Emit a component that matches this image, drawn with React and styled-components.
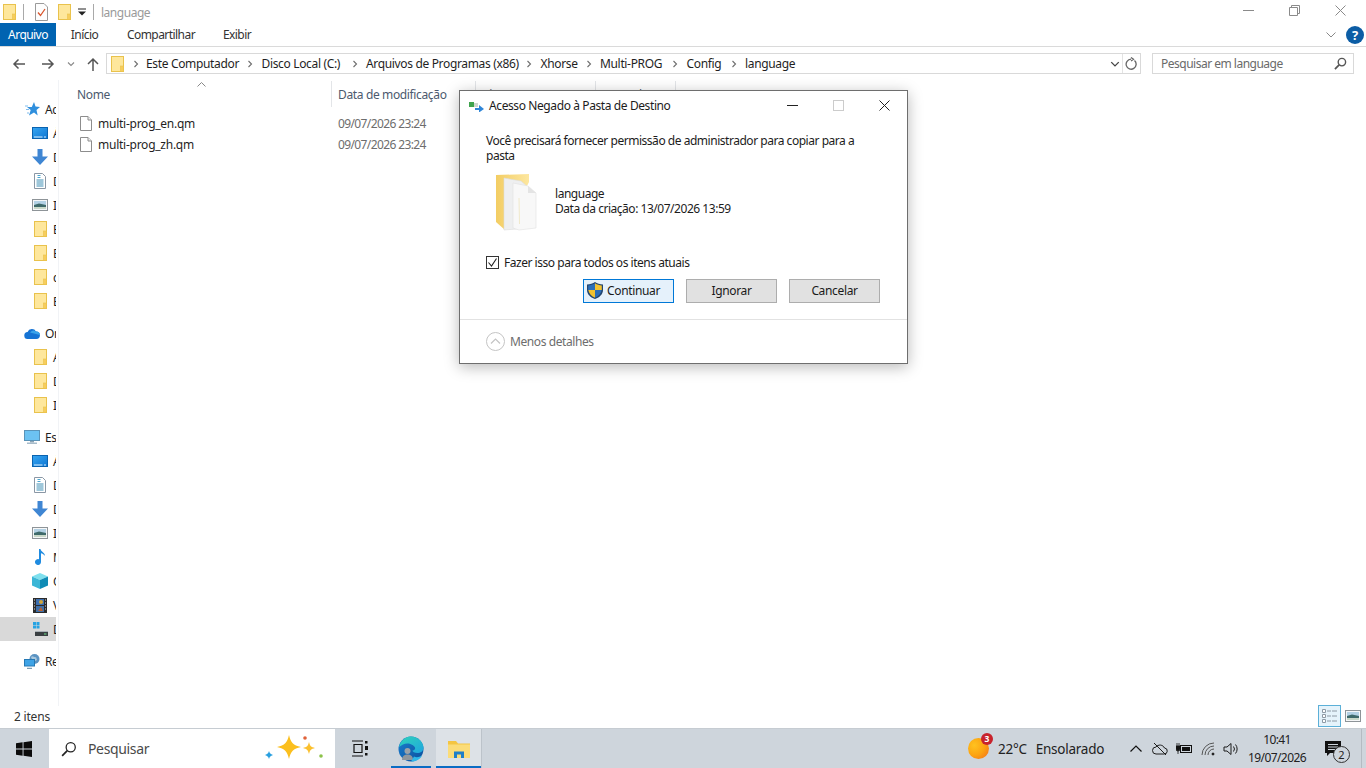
import React from "react";
import styled, { createGlobalStyle } from "styled-components";

const Global = createGlobalStyle`
  html, body { margin: 0; padding: 0; background: #fff; }
  * { box-sizing: border-box; }
`;
const FONT = `"Noto Sans", "Open Sans", "Liberation Sans", sans-serif`;

const Page = styled.div`
  position: relative; width: 1366px; height: 768px; overflow: hidden; display: flex; flex-direction: column;
  font-family: ${FONT}; font-size: 12px; letter-spacing: -0.36px; color: #1a1a1a; background: #fff;
`;

/* ---------- title bar ---------- */
const TitleBar = styled.div`display: flex; align-items: center; height: 23px; padding-left: 2px;`;
const QuickSlot = styled.span`display: flex; align-items: center; justify-content: center; width: ${p => p.$w}px; margin-left: ${p => p.$ml || 0}px;`;
const QuickSep = styled.span`width: 1px; height: 16px; background: #a9a9a9; margin-left: ${p => p.$ml}px;`;
const WindowTitle = styled.span`margin-left: 7px; margin-top: 1px; color: #9a9a9a; letter-spacing: -0.48px;`;
const WindowControls = styled.div`display: flex; margin-left: auto; padding-right: 3px; margin-top: -2px;`;
const WinBtn = styled.span`width: 46px; height: 23px; display: flex; align-items: center; justify-content: center;`;

/* ---------- ribbon ---------- */
const Ribbon = styled.div`display: flex; align-items: center; height: 24px; border-bottom: 1px solid #dadada; letter-spacing: -0.55px;`;
const FileTab = styled.div`width: 56px; height: 23px; background: #0063b1; color: #fff; display: flex; align-items: center; justify-content: center;`;
const RibbonTab = styled.div`width: ${p => p.$w}px; text-align: center; color: #333;`;
const RibbonRight = styled.div`margin-left: auto; display: flex; align-items: center; gap: 10px; padding-right: 2px;`;
const HelpBadge = styled.span`
  width: 18px; height: 18px; border-radius: 50%; background: #0c5da5; color: #fff; font-weight: 700; font-size: 13px;
  display: flex; align-items: center; justify-content: center; letter-spacing: 0;
`;

/* ---------- address row ---------- */
const AddressRow = styled.div`display: flex; align-items: center; height: 33px;`;
const NavSlot = styled.span`display: flex; align-items: center; justify-content: center; width: ${p => p.$w}px; margin-left: ${p => p.$ml || 0}px;`;
const AddressBox = styled.div`
  width: 1035px; height: 21px; margin-left: 7px; border: 1px solid #d9d9d9; display: flex; align-items: center; padding-left: 4px;
`;
const Crumbs = styled.div`display: flex; align-items: center; margin-left: 2px; color: #1f1f1f; letter-spacing: -0.34px;`;
const Crumb = styled.span`white-space: nowrap; width: ${p => p.$w}px; flex: none;`;
const CrumbSep = styled.span`width: ${p => p.$w || 22.5}px; display: flex; justify-content: center; flex: none;`;
const AddressTools = styled.div`margin-left: auto; display: flex; align-items: center; height: 100%;`;
const ToolDivider = styled.span`width: 1px; height: 19px; background: #e3e3e3; margin: 0 2px;`;
const RefreshGap = styled.span`width: 3px;`;
const SearchBox = styled.div`
  width: 202px; height: 21px; margin-left: 11px; border: 1px solid #d9d9d9; display: flex; align-items: center; justify-content: space-between;
  padding: 0 6px 0 8px; color: #6a6a6a; letter-spacing: -0.5px;
`;

/* ---------- body ---------- */
const Body = styled.div`flex: 1; display: flex; min-height: 0;`;
const Sidebar = styled.nav`width: 59px; padding: 17px 2px 0 0; border-right: 1px solid #f1f3f6; display: flex; flex-direction: column; gap: 8px;`;
const NavGroup = styled.div`display: flex; flex-direction: column;`;
const NavRow = styled.div`
  height: 24px; width: 56px; overflow: hidden; display: flex; align-items: center; white-space: nowrap;
  padding-left: ${p => (p.$section ? 24 : 32)}px; gap: 5px; color: #1f1f1f;
  background: ${p => (p.$selected ? "#d9d9d9" : "transparent")};
`;
const NavIcon = styled.span`width: 16px; height: 20px; flex: none; display: flex; align-items: center; justify-content: center;`;

const Files = styled.main`flex: 1; padding: 1px 0 0 18px;`;
const HeaderRow = styled.div`display: flex; height: 26px; color: #4c5a6e;`;
const HeaderCell = styled.div`
  position: relative; width: ${p => p.$w}px; flex: none; padding-left: ${p => p.$pl || 0}px; display: flex; align-items: center; white-space: nowrap;
  border-right: 1px solid #e3e5e8;
`;
const SortMark = styled.svg`position: absolute; left: 120px; top: 1px;`;
const FileList = styled.div`padding-top: 6px;`;
const FileRow = styled.div`display: flex; height: 21px; align-items: center;`;
const FileName = styled.div`width: 254px; flex: none; display: flex; align-items: center; gap: 6px; padding-left: 3px; color: #1f1f1f; letter-spacing: -0.25px;`;
const FileDate = styled.div`padding-left: 7px; color: #6d6d6d; letter-spacing: -0.62px;`;

/* ---------- status bar ---------- */
const StatusBar = styled.div`height: 22px; display: flex; align-items: center; padding: 0 2px 2px 14px; color: #333; letter-spacing: -0.2px;`;
const ViewButtons = styled.div`margin-left: auto; display: flex; align-items: center;`;
const ViewBtn = styled.span`
  width: 23px; height: 22px; display: flex; align-items: center; justify-content: center;
  background: ${p => (p.$on ? "#e5f3fb" : "transparent")}; border: 1px solid ${p => (p.$on ? "#5cb0d8" : "transparent")};
`;

/* ---------- taskbar ---------- */
const Taskbar = styled.footer`height: 40px; background: #ced5dc; display: flex; align-items: stretch; border-top: 1px solid #c6ccd2;`;
const StartBtn = styled.span`width: 48px; display: flex; align-items: center; justify-content: center;`;
const TaskSearch = styled.div`
  width: 286px; margin-left: 1px; background: #fff; display: flex; align-items: center; padding: 0 8px 0 12px;
  font-size: 14px; letter-spacing: -0.35px; color: #4a4a4a;
`;
const SearchLabel = styled.span`margin-left: 11px;`;
const Sparkle = styled.span`margin-left: auto; display: flex; align-items: center;`;
const TaskBtn = styled.span`
  width: ${p => p.$w}px; margin-left: ${p => p.$ml || 0}px; display: flex; align-items: center; justify-content: center;
  background: ${p => (p.$open ? "#dde2e7" : "transparent")};
  border-bottom: 2px solid ${p => (p.$run ? "#0a6cc4" : "transparent")};
  border-top: 2px solid transparent;
`;
const TaskDivider = styled.span`width: 1px; background: #bcc3ca;`;
const Tray = styled.div`margin-left: auto; display: flex; align-items: center; color: #222; height: 100%;`;
const Weather = styled.div`display: flex; align-items: center; width: 156px; font-size: 13.5px; letter-spacing: -0.25px;`;
const WeatherBall = styled.span`
  position: relative; width: 21px; height: 21px; border-radius: 50%; margin-right: 9px; flex: none;
  background: radial-gradient(circle at 30% 35%, #ffc21f 0%, #fca311 50%, #f26b1d 100%);
`;
const WeatherCount = styled.span`
  position: absolute; right: -4px; top: -5px; width: 12px; height: 12px; border-radius: 50%; background: #c8232c; color: #fff;
  font-size: 8.5px; font-weight: 700; line-height: 12px; text-align: center; letter-spacing: 0;
`;
const WeatherText = styled.span`margin-right: 9px;`;
const TraySlot = styled.span`width: ${p => p.$w}px; display: flex; align-items: center; justify-content: center; flex: none;`;
const Clock = styled.div`width: 70px; display: flex; flex-direction: column; align-items: center; line-height: 18px; color: #222; letter-spacing: -0.6px;`;
const Notice = styled.span`position: relative; width: 42px; height: 100%; display: flex; align-items: center; justify-content: center;`;
const NoticeCount = styled.span`
  position: absolute; left: 21px; top: 17px; width: 17px; height: 17px; border-radius: 50%; border: 1px solid #333; background: #ced5dc;
  font-size: 11px; line-height: 15px; text-align: center; letter-spacing: 0;
`;
const DesktopEdge = styled.span`width: 1px; height: 100%; background: #b4bbc2; margin: 0 4px 0 7px;`;

/* ---------- dialog ---------- */
const Dialog = styled.section`
  position: absolute; left: 459px; top: 90px; width: 449px; height: 274px; background: #fff;
  border: 1px solid #6e6e6e; box-shadow: 0 3px 14px rgba(0,0,0,.28); display: flex; flex-direction: column;
`;
const DialogHead = styled.header`height: 29px; display: flex; align-items: center; padding-left: 9px; color: #1c1c1c; letter-spacing: -0.4px;`;
const DialogTitle = styled.span`margin-left: 5px;`;
const DialogControls = styled.div`margin-left: auto; display: flex;`;
const DialogCtl = styled.span`width: 46px; display: flex; justify-content: center; align-items: center;`;
const DialogBody = styled.div`flex: 1; padding: 13px 26px 0 26px; display: flex; flex-direction: column; letter-spacing: -0.47px;`;
const Message = styled.p`margin: 0; line-height: 15px; width: 390px; color: #1c1c1c;`;
const FolderInfo = styled.div`display: flex; align-items: center; margin-top: 9px; height: 60px; padding-left: 9px;`;
const FolderMeta = styled.div`margin-left: 14px; line-height: 15px; margin-top: -2px; color: #1c1c1c;`;
const CheckRow = styled.label`display: flex; align-items: center; gap: 5px; margin-top: 23px; height: 14px; color: #1c1c1c;`;
const CheckBox = styled.span`width: 13px; height: 13px; border: 1px solid #333; display: flex; align-items: center; justify-content: center; background: #fff;`;
const ButtonRow = styled.div`display: flex; justify-content: flex-end; gap: 12px; margin-top: 10px; padding-right: 1px;`;
const DialogButton = styled.button`
  width: 91px; height: 24px; font: inherit; letter-spacing: -0.35px; color: #1a1a1a; display: flex; align-items: center; gap: 4px;
  justify-content: ${p => (p.$primary ? "flex-start" : "center")}; padding: 0 0 2px ${p => (p.$primary ? 3 : 0)}px;
  background: ${p => (p.$primary ? "#e5f1fb" : "#e1e1e1")};
  border: 1px solid ${p => (p.$primary ? "#0078d7" : "#adadad")};
`;
const DialogFoot = styled.footer`
  height: 44px; border-top: 1px solid #e2e2e2; display: flex; align-items: center; padding: 0 0 0 26px; gap: 5px; color: #6d6d6d; letter-spacing: -0.42px;
`;

/* ---------- drawings ---------- */
const Folder = ({ w = 13, h = 16 }) => (
  <svg width={w} height={h} viewBox="0 0 13 16">
    <rect x=".5" y=".5" width="12" height="15" fill="#fee79c" stroke="#e9c24c" />
    <rect x="9.500" y="10" width="3" height="5.500" fill="#f7cd5c" stroke="#e9c24c" strokeWidth=".6" />
  </svg>
);
const DesktopIc = () => (
  <svg width="16" height="12" viewBox="0 0 16 12">
    <defs><linearGradient id="dk" x1="0" y1="0" x2="1" y2="1"><stop offset="0" stopColor="#37a6f2" /><stop offset="1" stopColor="#0e76d2" /></linearGradient></defs>
    <rect x=".5" y=".5" width="15" height="11" fill="url(#dk)" stroke="#0a63b0" />
    <path d="M2 10h8.500M12 10h2" stroke="#dff1ff" strokeWidth="1" />
  </svg>
);
const DownIc = () => (
  <svg width="16" height="16" viewBox="0 0 16 16"><path d="M5.500 0h5v7.500H16L8 16 0 7.500h5.500z" fill="#3f86d3" /></svg>
);
const DocIc = () => (
  <svg width="12" height="16" viewBox="0 0 12 16">
    <path d="M.5.500h8l3 3v12H.5z" fill="#fff" stroke="#8a97a5" />
    <path d="M2.500 7h7M2.500 9h7M2.500 11h7M2.500 13h7" stroke="#3e8fb5" strokeWidth="1" />
    <path d="M3.500 2.500h3M3.500 4.500h3" stroke="#4aa6d0" strokeWidth="1" />
  </svg>
);
const PicIc = () => (
  <svg width="16" height="12" viewBox="0 0 16 12">
    <rect x=".5" y=".5" width="15" height="11" fill="#f6f7f8" stroke="#8e9498" />
    <rect x="2" y="2" width="12" height="4" fill="#b3d1e4" />
    <path d="M2 6l5-1.500L14 6v4H2z" fill="#3f6a6a" />
    <rect x="2" y="8" width="12" height="2" fill="#c9d8c8" />
  </svg>
);
const StarIc = () => (
  <svg width="16" height="14" viewBox="0 0 16 14">
    <path d="M10 0l1.500 4.500L16 5l-3.500 3 1.200 5.500L10 10.500 5 13.500l1.700-5.500L3 5h4.800z" fill="#2f8fdd" />
    <path d="M1 4h3M2 7.500h3M3 11h2" stroke="#7fbcec" strokeWidth="1" />
  </svg>
);
const CloudIc = () => (
  <svg width="16" height="11" viewBox="0 0 16 11">
    <path d="M4 11a3.500 3.500 0 0 1-.4-7A4.600 4.600 0 0 1 12 3.400 3.800 3.800 0 0 1 12.300 11z" fill="#1573d4" />
    <path d="M6 4.500A4.600 4.600 0 0 1 12 3.400 3.800 3.800 0 0 1 16 7z" fill="#39a3ea" />
  </svg>
);
const MonitorIc = () => (
  <svg width="16" height="14" viewBox="0 0 16 14">
    <rect x=".5" y=".5" width="15" height="10" fill="#6cc2f2" stroke="#5a93b8" />
    <rect x="6" y="11" width="4" height="1.500" fill="#8aa3b4" />
    <rect x="3" y="12.500" width="10" height="1.500" fill="#a7bccb" />
  </svg>
);
const MusicIc = () => (
  <svg width="12" height="16" viewBox="0 0 12 16">
    <path d="M5 0h1.500c.3 2.500 4.500 3.500 4.500 7-1-1.500-2.500-2.500-4-2.800V13a3 3 0 1 1-2-2.800z" fill="#1f8be0" />
  </svg>
);
const CubeIc = () => (
  <svg width="16" height="16" viewBox="0 0 16 16">
    <path d="M8 0l8 3.500L8 7 0 3.500z" fill="#7fe0ee" />
    <path d="M0 3.500L8 7v9l-8-3.500z" fill="#3bb6d6" />
    <path d="M16 3.500L8 7v9l8-3.500z" fill="#0f8bb5" />
  </svg>
);
const FilmIc = () => (
  <svg width="14" height="15" viewBox="0 0 14 15">
    <rect width="14" height="15" fill="#2b2b2b" />
    <rect x="3" y="1" width="8" height="6" fill="#3c6fb0" />
    <rect x="3" y="8" width="8" height="6" fill="#3f6fa8" />
    <circle cx="8" cy="4" r="2" fill="#d2a63a" />
    <path d="M5 13l3-4 2 4z" fill="#b9612e" />
    <path d="M1 2h1M1 5h1M1 8h1M1 11h1M12 2h1M12 5h1M12 8h1M12 11h1" stroke="#ddd" />
  </svg>
);
const DriveIc = () => (
  <svg width="16" height="16" viewBox="0 0 16 16">
    <path d="M1 1h3v3H1zM4.500 1h3v3h-3zM1 4.500h3v3H1zM4.500 4.500h3v3h-3z" fill="#27a3e3" />
    <rect x="3" y="11" width="13" height="4" fill="#3a3f42" />
    <rect x="3" y="10" width="13" height="1" fill="#a9b1b6" />
    <path d="M12 13h2.500" stroke="#6ee08a" />
  </svg>
);
const NetIc = () => (
  <svg width="16" height="15" viewBox="0 0 16 15">
    <circle cx="10.500" cy="5" r="5" fill="#5b93c2" />
    <path d="M7 3c2-2 3 1 5 0l1 3-4 2z" fill="#aac8dd" />
    <rect x=".5" y="5.500" width="10" height="6.500" fill="#3ea3e6" stroke="#2578b4" />
    <path d="M3 14.500h5" stroke="#7d9cb2" strokeWidth="1.500" />
  </svg>
);
const ChecklistIc = () => (
  <svg width="13" height="18" viewBox="0 0 13 18">
    <path d="M.5.500h8.500l3.500 3.500v13.500H.5z" fill="#fdfdfd" stroke="#9a9a9a" />
    <path d="M3 9.500l2.500 3L10 6" fill="none" stroke="#d9542b" strokeWidth="1.300" />
  </svg>
);
const FileIc = () => (
  <svg width="12" height="15" viewBox="0 0 12 15">
    <path d="M.5.500h7.500l3.500 3.500v10.500H.5z" fill="#fff" stroke="#8d8d8d" />
    <path d="M8 .500V4h3.500" fill="#f1f1f1" stroke="#8d8d8d" />
  </svg>
);
const Chevron = ({ dir = "r", c = "#6e6e6e", s = 8 }) => (
  <svg width={s} height={s} viewBox="0 0 8 8">
    <path d={dir === "r" ? "M2.500 1l3 3-3 3" : dir === "d" ? "M1 2.500l3 3 3-3" : "M1 5.500l3-3 3 3"} fill="none" stroke={c} strokeWidth="1.100" />
  </svg>
);
const ArrowLeft = ({ c }) => (
  <svg width="14" height="12" viewBox="0 0 14 12"><path d="M13 6H2M6.500 1.500L2 6l4.500 4.500" fill="none" stroke={c} strokeWidth="1.500" /></svg>
);
const ArrowRight = ({ c }) => (
  <svg width="14" height="12" viewBox="0 0 14 12"><path d="M1 6h11M7.500 1.500L12 6l-4.500 4.500" fill="none" stroke={c} strokeWidth="1.500" /></svg>
);
const ArrowUp = () => (
  <svg width="12" height="14" viewBox="0 0 12 14"><path d="M6 14V2M1 7l5-5 5 5" fill="none" stroke="#555" strokeWidth="1.500" /></svg>
);
const BigFolder = () => (
  <svg width="46" height="60" viewBox="0 0 46 60">
    <defs>
      <linearGradient id="fy" x1="0" y1="0" x2="1" y2="0"><stop offset="0" stopColor="#f3cd63" /><stop offset="1" stopColor="#fde7a0" /></linearGradient>
    </defs>
    <path d="M1 3l33-1v8L10 58 1 50z" fill="url(#fy)" />
    <path d="M9 6l17 3 8 7v40L9 58z" fill="#eeeff0" stroke="#dcdcdc" strokeWidth=".6" />
    <path d="M18 11l15 3 8 7v35l-17 2-6-2z" fill="#f8f8f8" stroke="#e0e0e0" strokeWidth=".6" />
    <path d="M33 14v7h8z" fill="#e4e4e4" />
    <path d="M24 26l.5 26" stroke="#efe6c0" strokeWidth=".8" />
  </svg>
);
const Shield = () => (
  <svg width="16" height="17" viewBox="0 0 16 17">
    <path d="M8 0c2 1.500 5 2.500 8 2.500V8c0 4-3 7.200-8 9-5-1.800-8-5-8-9V2.500C3 2.500 6 1.500 8 0z" fill="#23456f" />
    <path d="M8 1.200V8h6.800V3.500C12.300 3.300 10 2.500 8 1.200zM8 8v7.700C4.500 14.300 2 11.500 1.300 8z" fill="#f2c230" />
    <path d="M8 1.200V8H1.200V3.500C3.700 3.300 6 2.500 8 1.200zM8 8h6.700c-.7 3.500-3.200 6.300-6.700 7.700z" fill="#2b6eb8" />
  </svg>
);
const WinLogo = () => (
  <svg width="16" height="16" viewBox="0 0 16 16">
    <path d="M0 2.300L6.600 1.300v6.200H0zM7.500 1.200L16 0v7.500H7.500zM0 8.400h6.600v6.300L0 13.700zM7.500 8.400H16V16l-8.500-1.200z" fill="#0b0b0b" />
  </svg>
);
const SparkleArt = () => (
  <svg width="62" height="30" viewBox="0 0 62 30">
    <path d="M24 1c2 8 4 10 12 12-8 2-10 4-12 12-2-8-4-10-12-12 8-2 10-4 12-12z" fill="#fbbf1e" />
    <path d="M44 8c1 4 2 5 6 6-4 1-5 2-6 6-1-4-2-5-6-6 4-1 5-2 6-6z" fill="#fbc02d" />
    <path d="M4 17c.7 2.300 1.500 3 4 4-2.500 1-3.300 1.700-4 4-.7-2.300-1.500-3-4-4 2.500-1 3.300-1.700 4-4z" fill="#2aa0e0" />
    <circle cx="40" cy="4" r="1.800" fill="#e0623a" />
    <circle cx="56" cy="22" r="1.800" fill="#8cc24a" />
  </svg>
);
const Magnifier = ({ s = 14, c = "#555", w = 1.5 }) => (
  <svg width={s} height={s} viewBox="0 0 14 14">
    <circle cx="8.500" cy="5.500" r="4" fill="none" stroke={c} strokeWidth={w} />
    <path d="M5.500 8.500L1 13" stroke={c} strokeWidth={w + .4} />
  </svg>
);
const TaskViewIc = () => (
  <svg width="18" height="17" viewBox="0 0 18 17">
    <path d="M1 1h11M1 16h11M3 4.500h8v8H3z" fill="none" stroke="#111" strokeWidth="1.200" />
    <rect x="14" y="1" width="2.500" height="2.500" fill="#111" />
    <rect x="14" y="6" width="3" height="4" fill="#111" />
    <rect x="14" y="13" width="2.500" height="2.500" fill="#111" />
  </svg>
);
const EdgeIc = () => (
  <svg width="26" height="26" viewBox="0 0 26 26">
    <defs>
      <linearGradient id="eg" x1="0" y1="0" x2="1" y2="1"><stop offset="0" stopColor="#2fd3b8" /><stop offset="1" stopColor="#1fa5e0" /></linearGradient>
      <linearGradient id="eb" x1="0" y1="0" x2="1" y2="1"><stop offset="0" stopColor="#1a7fd0" /><stop offset="1" stopColor="#0c4f9c" /></linearGradient>
    </defs>
    <circle cx="13" cy="13" r="12.500" fill="url(#eb)" />
    <path d="M1 11C3 3 9 .5 13 .5 20 .5 25.500 6 25.500 12c0 3-3 5-6 5-3 0-5-1-5-2.500 2 0 3-1.500 2.500-3C15.500 8 9 6 5 8.500 3 9.500 2 10.500 1 11z" fill="url(#eg)" />
    <circle cx="9.500" cy="15" r="3" fill="#9aa1a8" />
    <path d="M4 24c0-4 2.500-5.500 5.500-5.500S15 20 15 24z" fill="#8f969d" />
    <path d="M13 25.500c5 0 9-2 11-6-3 2-6 2-8 1z" fill="#2fb7e8" />
  </svg>
);
const ExplorerIc = () => (
  <svg width="22" height="18" viewBox="0 0 22 18">
    <path d="M0 1h8l2 2.500h12V18H0z" fill="#f4c542" />
    <path d="M0 4.500h22V18H0z" fill="#fbdc78" />
    <path d="M6 18v-6.500h10V18h-3v-3.500H9V18z" fill="#1f7fc8" />
  </svg>
);
const Outline = ({ children, w = 18, h = 16 }) => (
  <svg width={w} height={h} viewBox={`0 0 ${w} ${h}`} fill="none" stroke="#1c1c1c" strokeWidth="1">{children}</svg>
);

const QUICK = [
  [DesktopIc, "Área de Trabalho"], [DownIc, "Downloads"], [DocIc, "Documentos"], [PicIc, "Imagens"],
  [Folder, "Backup"], [Folder, "Bin"], [Folder, "config"], [Folder, "Eletrônica"],
];
const DRIVE = [[Folder, "Anexos"], [Folder, "Documentos"], [Folder, "Imagens"]];
const PC = [
  [DesktopIc, "Área de Trabalho"], [DocIc, "Documentos"], [DownIc, "Downloads"], [PicIc, "Imagens"],
  [MusicIc, "Músicas"], [CubeIc, "Objetos 3D"], [FilmIc, "Vídeos"],
];
const PATH = [
  ["Este Computador", 93], ["Disco Local (C:)", 82], ["Arquivos de Programas (x86)", 152],
  ["Xhorse", 37], ["Multi-PROG", 64], ["Config", 36], ["language", 49],
];

const NavItem = ({ icon: I, label, section, selected }) => (
  <NavRow $section={section} $selected={selected}>
    <NavIcon><I /></NavIcon><span>{label}</span>
  </NavRow>
);

export default function App() {
  return (
    <Page>
      <Global />
      <TitleBar>
        <QuickSlot $w={14}><Folder /></QuickSlot>
        <QuickSep $ml={7} />
        <QuickSlot $w={13} $ml={11}><ChecklistIc /></QuickSlot>
        <QuickSlot $w={14} $ml={9}><Folder /></QuickSlot>
        <QuickSlot $w={8} $ml={7}>
          <svg width="8" height="8" viewBox="0 0 8 8"><path d="M0 1h8" stroke="#222" /><path d="M0 3.500h8L4 7.500z" fill="#222" /></svg>
        </QuickSlot>
        <QuickSep $ml={7} />
        <WindowTitle>language</WindowTitle>
        <WindowControls>
          <WinBtn><svg width="11" height="11" viewBox="0 0 11 11"><path d="M0 5.500h11" stroke="#8a8a8a" /></svg></WinBtn>
          <WinBtn><svg width="11" height="11" viewBox="0 0 11 11"><path d="M.5 2.500h8v8h-8zM2.500 2.500v-2h8v8h-2" fill="none" stroke="#8a8a8a" /></svg></WinBtn>
          <WinBtn><svg width="11" height="11" viewBox="0 0 11 11"><path d="M.5.500l10 10M10.500.500l-10 10" stroke="#8a8a8a" /></svg></WinBtn>
        </WindowControls>
      </TitleBar>

      <Ribbon>
        <FileTab>Arquivo</FileTab>
        <RibbonTab $w={57}>Início</RibbonTab>
        <RibbonTab $w={96}>Compartilhar</RibbonTab>
        <RibbonTab $w={56}>Exibir</RibbonTab>
        <RibbonRight>
          <svg width="10" height="6" viewBox="0 0 10 6"><path d="M.5.500L5 5 9.500.500" fill="none" stroke="#888" /></svg>
          <HelpBadge>?</HelpBadge>
        </RibbonRight>
      </Ribbon>

      <AddressRow>
        <NavSlot $w={14} $ml={12}><ArrowLeft c="#555" /></NavSlot>
        <NavSlot $w={14} $ml={15}><ArrowRight c="#555" /></NavSlot>
        <NavSlot $w={8} $ml={12}><Chevron dir="d" c="#888" /></NavSlot>
        <NavSlot $w={12} $ml={12}><ArrowUp /></NavSlot>
        <AddressBox>
          <Folder />
          <Crumbs>
            <CrumbSep $w={20}><Chevron /></CrumbSep>
            {PATH.map(([p, w], i) => (
              <React.Fragment key={p}>
                {i > 0 && <CrumbSep><Chevron /></CrumbSep>}
                <Crumb $w={w}>{p}</Crumb>
              </React.Fragment>
            ))}
          </Crumbs>
          <AddressTools>
            <Chevron dir="d" c="#444" s={10} />
            <ToolDivider />
            <svg width="12" height="13" viewBox="0 0 12 13"><path d="M9.500 3.500A5 5 0 1 1 6 2.200M6 .5L8.500 2.300 6 4" fill="none" stroke="#666" strokeWidth="1.300" /></svg>
            <RefreshGap />
          </AddressTools>
        </AddressBox>
        <SearchBox>
          <span>Pesquisar em language</span>
          <Magnifier s={13} />
        </SearchBox>
      </AddressRow>

      <Body>
        <Sidebar>
          <NavGroup>
            <NavItem section icon={StarIc} label="Acesso rápido" />
            {QUICK.map(([I, l]) => <NavItem key={l} icon={I} label={l} />)}
          </NavGroup>
          <NavGroup>
            <NavItem section icon={CloudIc} label="OneDrive" />
            {DRIVE.map(([I, l]) => <NavItem key={l} icon={I} label={l} />)}
          </NavGroup>
          <NavGroup>
            <NavItem section icon={MonitorIc} label="Este Computador" />
            {PC.map(([I, l]) => <NavItem key={l} icon={I} label={l} />)}
            <NavItem selected icon={DriveIc} label="Disco Local (C:)" />
          </NavGroup>
          <NavGroup>
            <NavItem section icon={NetIc} label="Rede" />
          </NavGroup>
        </Sidebar>
        <Files>
          <HeaderRow>
            <HeaderCell $w={255}>
              Nome
              <SortMark width="9" height="5" viewBox="0 0 9 5"><path d="M.5 4.500L4.500.5l4 4" fill="none" stroke="#888" /></SortMark>
            </HeaderCell>
            <HeaderCell $w={144} $pl={6}>Data de modificação</HeaderCell>
            <HeaderCell $w={120} $pl={7}>Tipo</HeaderCell>
            <HeaderCell $w={80} $pl={7}>Tamanho</HeaderCell>
          </HeaderRow>
          <FileList>
            <FileRow>
              <FileName><FileIc />multi-prog_en.qm</FileName>
              <FileDate>09/07/2026 23:24</FileDate>
            </FileRow>
            <FileRow>
              <FileName><FileIc />multi-prog_zh.qm</FileName>
              <FileDate>09/07/2026 23:24</FileDate>
            </FileRow>
          </FileList>
        </Files>
      </Body>

      <StatusBar>
        2 itens
        <ViewButtons>
          <ViewBtn $on>
            <svg width="16" height="14" viewBox="0 0 16 14">
              <path d="M.5.500h3v3h-3zM.5 5.500h3v3h-3zM.5 10.500h3v3h-3z" fill="#fff" stroke="#8e9aa5" />
              <path d="M5 2h4M10 2h5M5 7h4M10 7h5M5 12h4M10 12h5" stroke="#8e9aa5" />
            </svg>
          </ViewBtn>
          <ViewBtn><PicIc /></ViewBtn>
        </ViewButtons>
      </StatusBar>

      <Taskbar>
        <StartBtn><WinLogo /></StartBtn>
        <TaskSearch>
          <Magnifier s={16} c="#222" w={1.1} />
          <SearchLabel>Pesquisar</SearchLabel>
          <Sparkle><SparkleArt /></Sparkle>
        </TaskSearch>
        <TaskBtn $w={48} $ml={1}><TaskViewIc /></TaskBtn>
        <TaskBtn $w={40} $ml={7} $run><EdgeIc /></TaskBtn>
        <TaskBtn $w={45} $ml={5} $run $open><ExplorerIc /></TaskBtn>
        <TaskDivider />
        <Tray>
          <Weather>
            <WeatherBall><WeatherCount>3</WeatherCount></WeatherBall>
            <WeatherText>22°C</WeatherText>
            <span>Ensolarado</span>
          </Weather>
          <TraySlot $w={24}>
            <svg width="12" height="7" viewBox="0 0 12 7"><path d="M.5 6.500L6 1l5.500 5.500" fill="none" stroke="#111" strokeWidth="1.200" /></svg>
          </TraySlot>
          <TraySlot $w={24}>
            <Outline w={16} h={14}><path d="M4 12h8a3 3 0 0 0 .5-6A5 5 0 0 0 4 5a3.500 3.500 0 0 0 0 7zM2 1l12 12" /></Outline>
          </TraySlot>
          <TraySlot $w={24}>
            <svg width="16" height="12" viewBox="0 0 16 12">
              <rect x="4.500" y="2.500" width="11" height="7" fill="none" stroke="#111" />
              <rect x="6" y="4" width="8" height="4" fill="#111" />
              <path d="M0 3h4v3a2 2 0 0 1-4 0zM1 0v3M3 0v3M2 8v3" fill="#111" stroke="#111" strokeWidth=".8" />
            </svg>
          </TraySlot>
          <TraySlot $w={24}>
            <Outline w={14} h={14}><path d="M1 13A12 12 0 0 1 13 1M4 13a9 9 0 0 1 9-9M7 13a6 6 0 0 1 6-6" stroke="#555" /><circle cx="12" cy="12" r="1" fill="#111" /></Outline>
          </TraySlot>
          <TraySlot $w={22}>
            <Outline w={16} h={14}><path d="M1 5h3l4-3.500v11L4 9H1zM10.500 4.500a4 4 0 0 1 0 5M12.500 2.500a7 7 0 0 1 0 9" /></Outline>
          </TraySlot>
          <Clock><span>10:41</span><span>19/07/2026</span></Clock>
          <Notice>
            <svg width="16" height="16" viewBox="0 0 16 16"><path d="M0 0h16v12H5l-3 3v-3H0z" fill="#111" /><path d="M3 3.500h10M3 6h10M3 8.500h7" stroke="#ced5dc" /></svg>
            <NoticeCount>2</NoticeCount>
          </Notice>
          <DesktopEdge />
        </Tray>
      </Taskbar>

      <Dialog>
        <DialogHead>
          <svg width="15" height="12" viewBox="0 0 15 12">
            <rect x="0" y="2" width="5" height="5" fill="#3fa34d" />
            <rect x="5" y="3" width="4" height="4" fill="#cfd6cf" />
            <path d="M6 8h4V5l5 4-5 3.500V10H6z" fill="#2f86d8" />
          </svg>
          <DialogTitle>Acesso Negado à Pasta de Destino</DialogTitle>
          <DialogControls>
            <DialogCtl><svg width="11" height="11" viewBox="0 0 11 11"><path d="M0 5.500h11" stroke="#222" /></svg></DialogCtl>
            <DialogCtl><svg width="11" height="11" viewBox="0 0 11 11"><rect x=".5" y=".5" width="10" height="10" fill="none" stroke="#ccc" /></svg></DialogCtl>
            <DialogCtl><svg width="11" height="11" viewBox="0 0 11 11"><path d="M.5.500l10 10M10.500.500l-10 10" stroke="#222" /></svg></DialogCtl>
          </DialogControls>
        </DialogHead>
        <DialogBody>
          <Message>Você precisará fornecer permissão de administrador para copiar para a pasta</Message>
          <FolderInfo>
            <BigFolder />
            <FolderMeta>language<br />Data da criação: 13/07/2026 13:59</FolderMeta>
          </FolderInfo>
          <CheckRow>
            <CheckBox>
              <svg width="11" height="11" viewBox="0 0 11 11"><path d="M1.500 5.500l3 3.500 5-7.500" fill="none" stroke="#222" strokeWidth="1.100" /></svg>
            </CheckBox>
            Fazer isso para todos os itens atuais
          </CheckRow>
          <ButtonRow>
            <DialogButton $primary><Shield />Continuar</DialogButton>
            <DialogButton>Ignorar</DialogButton>
            <DialogButton>Cancelar</DialogButton>
          </ButtonRow>
        </DialogBody>
        <DialogFoot>
          <svg width="19" height="19" viewBox="0 0 19 19">
            <circle cx="9.500" cy="9.500" r="9" fill="#fff" stroke="#c4c4c4" />
            <path d="M5 11.500l4.500-4.500 4.500 4.500" fill="none" stroke="#c4c4c4" strokeWidth="1.200" />
          </svg>
          Menos detalhes
        </DialogFoot>
      </Dialog>
    </Page>
  );
}
